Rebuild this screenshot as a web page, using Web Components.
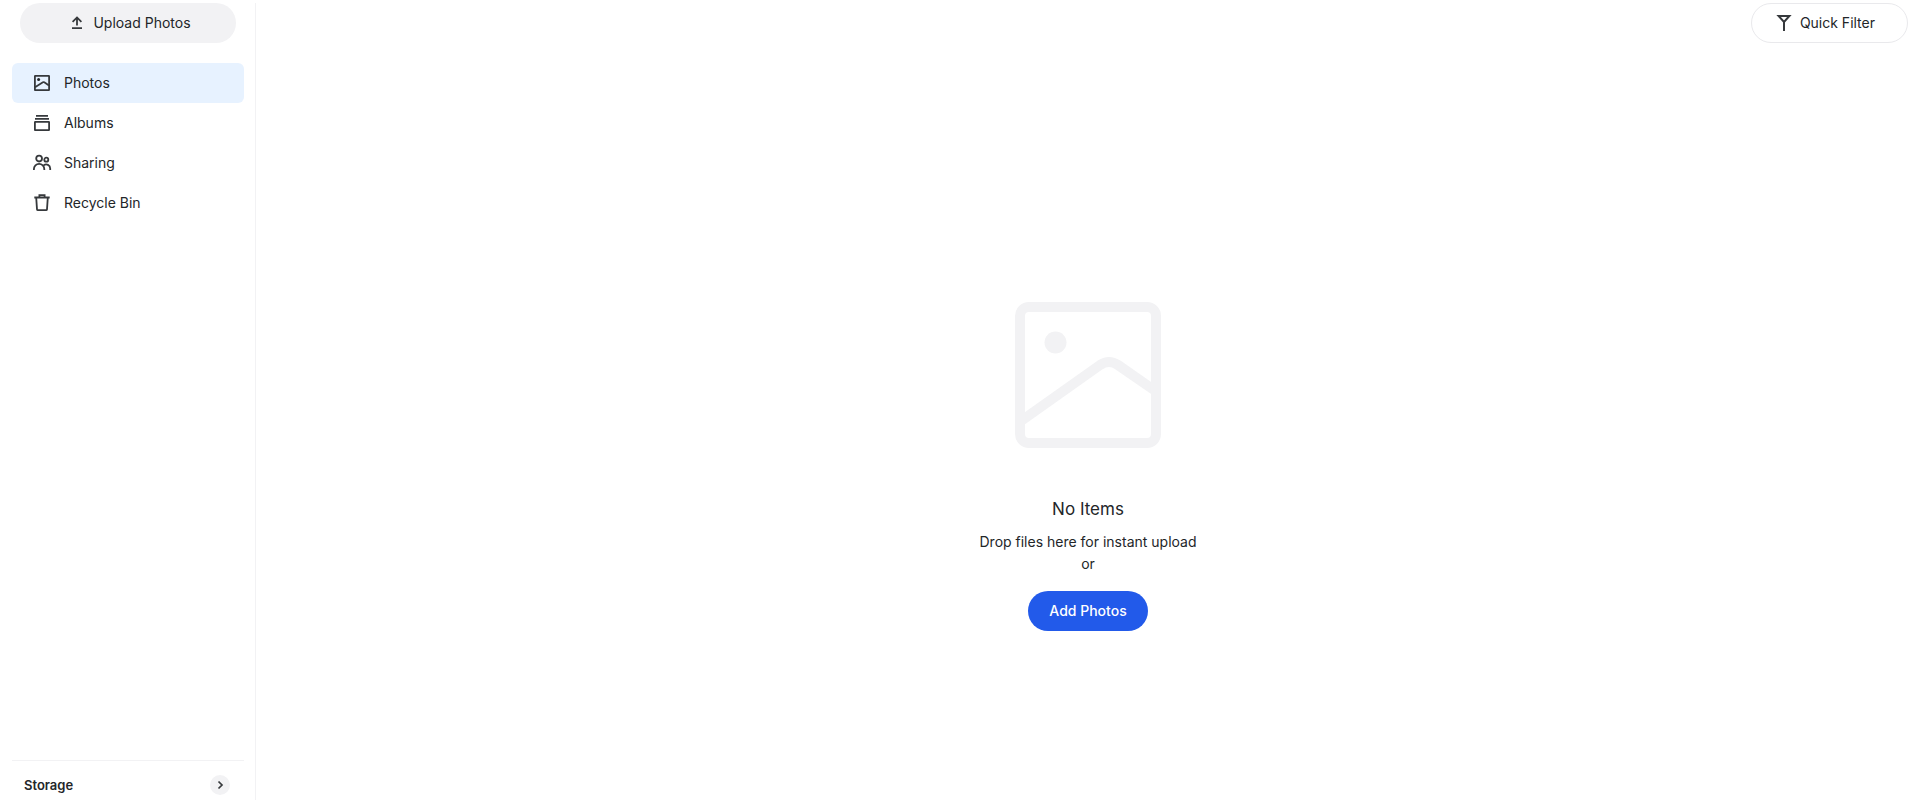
<!DOCTYPE html>
<html lang="en">
<head>
<meta charset="utf-8">
<title>Photos</title>
<style>
  html, body {
    height: 100%;
  }
  body {
    margin: 0;
    background: #fff;
    color: #232629;
    font: 14px/22px Inter, "Liberation Sans", sans-serif;
  }
</style>
</head>
<body>
<photo-app>
  <side-bar slot="side">
    <pill-button slot="action" icon="upload">Upload Photos</pill-button>
    <nav-item icon="photo" href="#photos" active>Photos</nav-item>
    <nav-item icon="albums" href="#albums">Albums</nav-item>
    <nav-item icon="sharing" href="#sharing">Sharing</nav-item>
    <nav-item icon="bin" href="#recycle-bin">Recycle Bin</nav-item>
    <storage-bar slot="footer">Storage</storage-bar>
  </side-bar>
  <pill-button slot="tools" icon="filter" variant="outline">Quick Filter</pill-button>
  <empty-state>
    <span slot="title">No Items</span>
    <span slot="hint">Drop files here for instant upload</span>
    <span slot="or">or</span>
    <pill-button slot="action" variant="primary">Add Photos</pill-button>
  </empty-state>
</photo-app>

<script>
const icons = {
  upload: '<path d="M5 15.2h10M10 12.6V4.8M5.6 8.8 10 4.4l4.4 4.4"/>',
  filter: '<path stroke-width="2" d="M4.6 3h10.8L10 9zM10 8.5V18"/>',
  photo: '<rect x="2.9" y="2.9" width="14.2" height="14.2" rx=".3"/><path d="m3 14.2 7.9-4.9q.7-.4 1.4 0l4.7 3.2"/><circle cx="6.6" cy="6.6" r="1.5" fill="currentColor" stroke="none"/>',
  albums: '<path d="M4 2.8h12M3 5.8h14"/><rect x="2.9" y="8.9" width="14.2" height="8.2" rx=".3"/>',
  sharing: '<circle cx="7.1" cy="5.6" r="2.9"/><circle cx="14.3" cy="6.7" r="2"/><path d="M1.9 17v-.9a5.2 5.2 0 0 1 10.4 0v.9M11.8 12.2a4 4 0 0 1 6.4 3.2V17"/>',
  bin: '<path d="M2.3 4.5h15.4M7.4 4.5V2.1h5.2v2.4M4.2 4.5l.8 11.8q.1.8.9.8h8.2q.8 0 .9-.8l.8-11.8"/>',
  arrow: '<path stroke-width="1.7" d="m8.5 6.5 3.5 3.5-3.5 3.5"/>'
};

const icon = name => `
  <svg width="20" height="20" viewBox="0 0 20 20" fill="none"
    stroke="#36393c" stroke-width="1.8" aria-hidden="true">${icons[name]}</svg>`;

class PhotoApp extends HTMLElement {
  constructor() {
    super();
    this.attachShadow({ mode: "open" });
    this.shadowRoot.innerHTML = `
      <style>
        :host {
          display: flex;
          box-sizing: border-box;
          min-height: 100vh;
          padding-top: 3px;
        }
        main {
          flex: 1;
          display: flex;
          flex-direction: column;
        }
        header {
          display: flex;
          justify-content: flex-end;
          padding-right: 12px;
        }
      </style>
      <slot name="side"></slot>
      <main>
        <header><slot name="tools"></slot></header>
        <slot></slot>
      </main>
    `;
  }
}

class SideBar extends HTMLElement {
  constructor() {
    super();
    this.attachShadow({ mode: "open" });
    this.shadowRoot.innerHTML = `
      <style>
        :host {
          display: flex;
          flex-direction: column;
          box-sizing: border-box;
          width: 256px;
          padding: 0 11px 0 12px;
          border-right: 1px solid #f2f2f4;
        }
        .action {
          padding: 0 8px 20px;
        }
        nav {
          flex: 1;
        }
      </style>
      <div class="action"><slot name="action"></slot></div>
      <nav><slot></slot></nav>
      <slot name="footer"></slot>
    `;
  }
}

class PillButton extends HTMLElement {
  constructor() {
    super();
    this.attachShadow({ mode: "open" });
    const name = this.getAttribute("icon");
    this.shadowRoot.innerHTML = `
      <style>
        :host {
          display: block;
        }
        button {
          display: flex;
          align-items: center;
          justify-content: center;
          gap: 6px;
          box-sizing: border-box;
          width: 100%;
          height: 40px;
          padding: 0 20px 0 22px;
          border: 1px solid transparent;
          border-radius: 20px;
          background: #f2f2f4;
          color: inherit;
          font: inherit;
          cursor: pointer;
        }
        :host([variant="outline"]) button {
          padding: 0 32px 0 22px;
          border-color: #e9e9ec;
          background: #fff;
        }
        :host([variant="primary"]) button {
          padding: 0 20px;
          background: #225aea;
          color: #fff;
          font-weight: 500;
        }
      </style>
      <button type="button">${name ? icon(name) : ""}<slot></slot></button>
    `;
  }
}

class NavItem extends HTMLElement {
  constructor() {
    super();
    this.attachShadow({ mode: "open" });
    this.shadowRoot.innerHTML = `
      <style>
        :host {
          display: block;
        }
        a {
          display: flex;
          align-items: center;
          gap: 12px;
          height: 40px;
          padding: 0 20px;
          border-radius: 6px;
          color: inherit;
          text-decoration: none;
        }
        :host([active]) a {
          background: #e7f2ff;
        }
      </style>
      <a href="${this.getAttribute("href")}">${icon(this.getAttribute("icon"))}<slot></slot></a>
    `;
  }
}

class StorageBar extends HTMLElement {
  constructor() {
    super();
    this.attachShadow({ mode: "open" });
    this.shadowRoot.innerHTML = `
      <style>
        :host {
          display: flex;
          align-items: center;
          justify-content: space-between;
          padding: 14px 14px 5px 12px;
          border-top: 1px solid #f2f2f4;
          font-size: 13px;
          line-height: 20px;
          font-weight: 600;
        }
        button {
          width: 20px;
          height: 20px;
          padding: 0;
          border: 0;
          border-radius: 50%;
          background: #f2f2f4;
          cursor: pointer;
        }
        svg {
          display: block;
        }
      </style>
      <slot></slot>
      <button type="button" aria-label="Show storage">${icon("arrow")}</button>
    `;
  }
}

class EmptyState extends HTMLElement {
  constructor() {
    super();
    this.attachShadow({ mode: "open" });
    this.shadowRoot.innerHTML = `
      <style>
        :host {
          flex: 1;
          display: flex;
          flex-direction: column;
          align-items: center;
          justify-content: center;
          padding-top: 62px;
          text-align: center;
        }
        h1 {
          margin: 22px 0 10px;
          font-size: 17px;
          line-height: 24px;
          font-weight: 400;
        }
        p {
          margin: 0;
        }
        .action {
          width: 120px;
          margin-top: 16px;
        }
      </style>
      <svg width="200" height="200" viewBox="0 0 200 200" fill="none" stroke="#f2f2f4" stroke-width="10" aria-hidden="true">
        <rect x="32" y="32" width="136" height="136" rx="9"/>
        <path d="m33 146 79-56q9-6 18 0l36 25"/>
        <circle cx="67.5" cy="67.5" r="11" fill="#f2f2f4" stroke="none"/>
      </svg>
      <h1><slot name="title"></slot></h1>
      <p><slot name="hint"></slot></p>
      <p><slot name="or"></slot></p>
      <div class="action"><slot name="action"></slot></div>
    `;
  }
}

customElements.define("photo-app", PhotoApp);
customElements.define("side-bar", SideBar);
customElements.define("pill-button", PillButton);
customElements.define("nav-item", NavItem);
customElements.define("storage-bar", StorageBar);
customElements.define("empty-state", EmptyState);
</script>
</body>
</html>
